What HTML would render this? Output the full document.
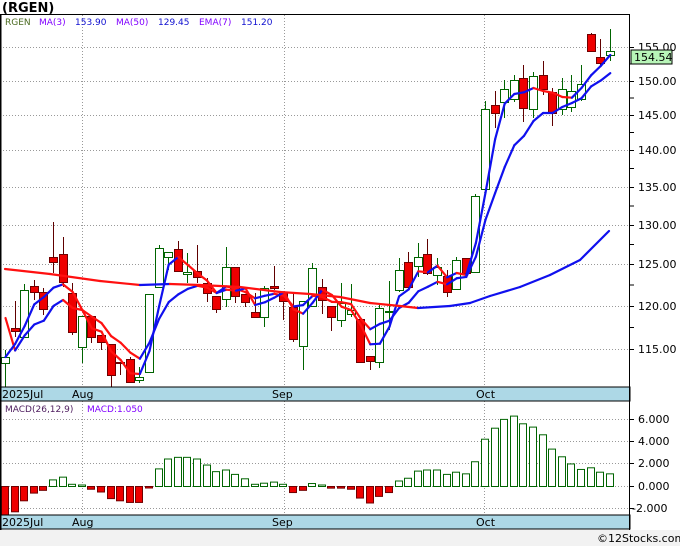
<!DOCTYPE html>
<html><head><meta charset="utf-8"><style>
html,body{margin:0;padding:0;background:#fff}
body{width:680px;height:546px;overflow:hidden;position:relative;font-family:"DejaVu Sans","Liberation Sans",sans-serif}
</style></head><body>
<svg id="s" width="680" height="546" xmlns="http://www.w3.org/2000/svg" style="position:absolute;left:0;top:0">
<rect x="0" y="0" width="680" height="546" fill="#fff"/>
<rect x="0" y="530" width="680" height="16" fill="#f2f2f2"/>
<text x="2" y="12" font-size="13" font-weight="bold" fill="#000">(RGEN)</text>
<g id="grid" stroke="#999" stroke-width="1" stroke-dasharray="1,2"></g>
<g id="g"></g>
<rect x="0" y="387" width="630" height="14" fill="#add8e6" stroke="#000"/>
<rect x="0" y="515" width="630" height="14" fill="#add8e6" stroke="#000"/>
<g font-size="11" fill="#000">
<text x="2" y="398">2025Jul</text><text x="72" y="398">Aug</text><text x="272" y="398">Sep</text><text x="476" y="398">Oct</text>
<text x="2" y="526">2025Jul</text><text x="72" y="526">Aug</text><text x="272" y="526">Sep</text><text x="476" y="526">Oct</text>
</g>
<line x1="0.5" y1="14" x2="0.5" y2="530" stroke="#000" stroke-width="2"/>
<line x1="0" y1="14.5" x2="630" y2="14.5" stroke="#000"/>
<line x1="629.5" y1="14" x2="629.5" y2="530" stroke="#000"/>
<g font-size="9" font-family="DejaVu Sans,sans-serif">
<text x="5" y="25" fill="#4a6a20">RGEN</text>
<text x="39" y="25" fill="#8000ff">MA(3)</text><text x="75" y="25" fill="#1010d0">153.90</text>
<text x="116" y="25" fill="#8000ff">MA(50)</text><text x="158" y="25" fill="#1010d0">129.45</text>
<text x="199" y="25" fill="#8000ff">EMA(7)</text><text x="241" y="25" fill="#1010d0">151.20</text>
<text x="5" y="412" fill="#502060">MACD(26,12,9)</text>
<text x="87" y="412" fill="#8000ff">MACD:1.050</text>
</g>
<g id="ax" font-size="11" fill="#000"></g>
<rect x="631" y="50" width="41" height="14" fill="#b8f5b8" stroke="#000"/>
<text x="634" y="61" font-size="11" fill="#000">154.54</text>
<text x="597" y="542" font-size="11" fill="#000">©12Stocks.com</text>
</svg>
<script>
var NS="http://www.w3.org/2000/svg";
function el(p,t,a){var e=document.createElementNS(NS,t);for(var k in a)e.setAttribute(k,a[k]);p.appendChild(e);return e;}
var g=document.getElementById('g'),grid=document.getElementById('grid'),ax=document.getElementById('ax');
// price grid
var pl=[[155,47],[150,81],[145,115],[140,150],[135,187],[130,225],[125,264],[120,306],[115,349]];
pl.forEach(function(p){el(grid,'line',{x1:0,x2:630,y1:p[1]+.5,y2:p[1]+.5});
el(ax,'text',{x:638,y:p[1]+4}).textContent=p[0].toFixed(2);
el(ax,'line',{x1:630,x2:634,y1:p[1]+.5,y2:p[1]+.5,stroke:'#000'});});
for(var i=0;i<pl.length-1;i++){var m=(pl[i][1]+pl[i+1][1])/2;el(ax,'line',{x1:630,x2:634,y1:m,y2:m,stroke:'#000'});}
[82,284,484].forEach(function(x){el(grid,'line',{x1:x+.5,x2:x+.5,y1:15,y2:387});el(grid,'line',{x1:x+.5,x2:x+.5,y1:401,y2:515});});
var mz=[[6,419],[4,441],[2,463],[0,486],[-2,508]];
mz.forEach(function(p){el(grid,'line',{x1:0,x2:630,y1:p[1]+.5,y2:p[1]+.5});
el(ax,'text',{x:p[0]<0?632:638,y:p[1]+4}).textContent=p[0].toFixed(3);
el(ax,'line',{x1:630,x2:634,y1:p[1]+.5,y2:p[1]+.5,stroke:'#000'});});
// candles: type, top, bot, high, low
var C=[['g',357,363,350,387],['r',328,331,301,337],['g',290,337,284,338],['r',286,292,280,300],['r',292,309,288,315],
['r',257,262,222,273],['r',254,282,237,287],['r',293,332,283,335],['g',316,347,316,363],['r',316,337,316,343],
['r',335,342,335,350],['r',344,375,344,387],['r',362,363,362,375],['r',359,382,357,383],['g',377,380,367,383],
['g',294,372,294,372],['g',248,287,245,287],['g',252,257,252,270],['r',249,271,241,272],['g',272,274,253,283],
['r',271,277,245,283],['r',283,293,278,302],['r',296,309,296,313],['g',267,299,247,307],['r',267,296,267,303],
['r',294,302,294,307],['r',312,317,293,317],['g',288,317,286,327],['r',286,288,266,290],['r',292,301,292,320],
['r',307,339,293,342],['g',301,346,301,370],['g',268,306,263,306],['r',287,300,279,314],['r',306,317,306,331],
['g',303,320,283,327],['g',310,314,284,317],['r',319,362,319,362],['r',356,361,356,370],['g',308,362,305,368],
['g',311,312,281,330],['g',270,290,258,292],['r',262,287,252,290],['g',257,266,243,277],['r',254,273,239,275],
['g',267,275,258,285],['r',276,292,270,297],['g',260,289,257,289],['r',258,273,258,275],['g',196,272,194,273],
['g',109,189,101,189],['r',105,113,91,128],['g',89,102,80,118],['g',80,99,75,102],['r',78,108,65,122],
['g',76,109,72,118],['r',75,89,61,95],['r',92,113,88,126],['g',89,109,78,115],['g',91,107,75,112],
['g',84,99,65,101],['r',34,51,33,52],['r',57,63,39,65],['g',51,55,29,61]];
var X=function(i){return 5+i*9.6;};
var closes=C.map(function(c){return c[0]=='g'?c[1]:c[2];});
C.forEach(function(c,i){var x=Math.round(X(i));
var wc=c[0]=='g'?'#006400':'#600000';
el(g,'line',{x1:x+.5,x2:x+.5,y1:c[3],y2:c[4],stroke:wc});
var h=Math.max(c[2]-c[1],1);
el(g,'rect',{x:x-3.5,y:c[1]+.5,width:8,height:h,fill:c[0]=='g'?'#fff':'#ee0000',stroke:c[0]=='g'?'#006400':'#700000'});});
function line(pts){for(var i=1;i<pts.length;i++){var a=pts[i-1],b=pts[i];
el(g,'line',{x1:a[0],y1:a[1],x2:b[0],y2:b[1],stroke:b[1]>a[1]+0.2?'#ff1010':'#1010ee','stroke-width':2.2,'stroke-linecap':'round'});}}
// MA3
var ma=[],ema=[],e=closes[0];
closes.forEach(function(c,i){var s=0,n=0;for(var j=Math.max(0,i-2);j<=i;j++){s+=closes[j];n++;}ma.push([X(i)+.5,s/n]);
e=i==0?c:(c*2/8+e*6/8);ema.push([X(i)+.5,e]);});
ema[0][1]=318;
line(ema);line(ma);
var m50=[[5,269],[50,274],[100,281],[140,285],[170,284],[200,285],[240,287],[280,292],[310,294],[340,297],[370,303],[400,306],[418,308],[450,306],[470,303],[490,296],[520,287],[550,275],[580,260],[609,231]];
line(m50);
// MACD
var M=[-2.6,-2.3,-1.3,-0.6,-0.35,0.6,0.85,0.2,0.05,-0.25,-0.5,-1.1,-1.3,-1.45,-1.45,-0.05,1.6,2.5,2.65,2.65,2.5,1.95,1.35,1.5,1.1,0.7,0.2,0.3,0.4,0.2,-0.55,-0.35,0.27,0.06,-0.15,-0.15,-0.25,-1.05,-1.5,-0.9,-0.55,0.5,0.75,1.4,1.5,1.5,1.1,1.3,1.15,2.25,4.3,5.3,6.1,6.4,5.7,5.4,4.7,3.4,2.7,2.05,1.55,1.7,1.3,1.15];
M.forEach(function(v,i){var x=Math.round(X(i));var h=Math.max(Math.abs(v)*11,1.5);
var y=v>=0?486-h:486;if(y+h>515)h=515-y;
if(v>=0)el(g,'rect',{x:x-3.5,y:y+.5,width:7,height:h,fill:'#fff',stroke:'#006400'});
else el(g,'rect',{x:x-3.5,y:y+.5,width:7,height:h,fill:'#ee0000',stroke:'#700000'});});
</script>
</body></html>
